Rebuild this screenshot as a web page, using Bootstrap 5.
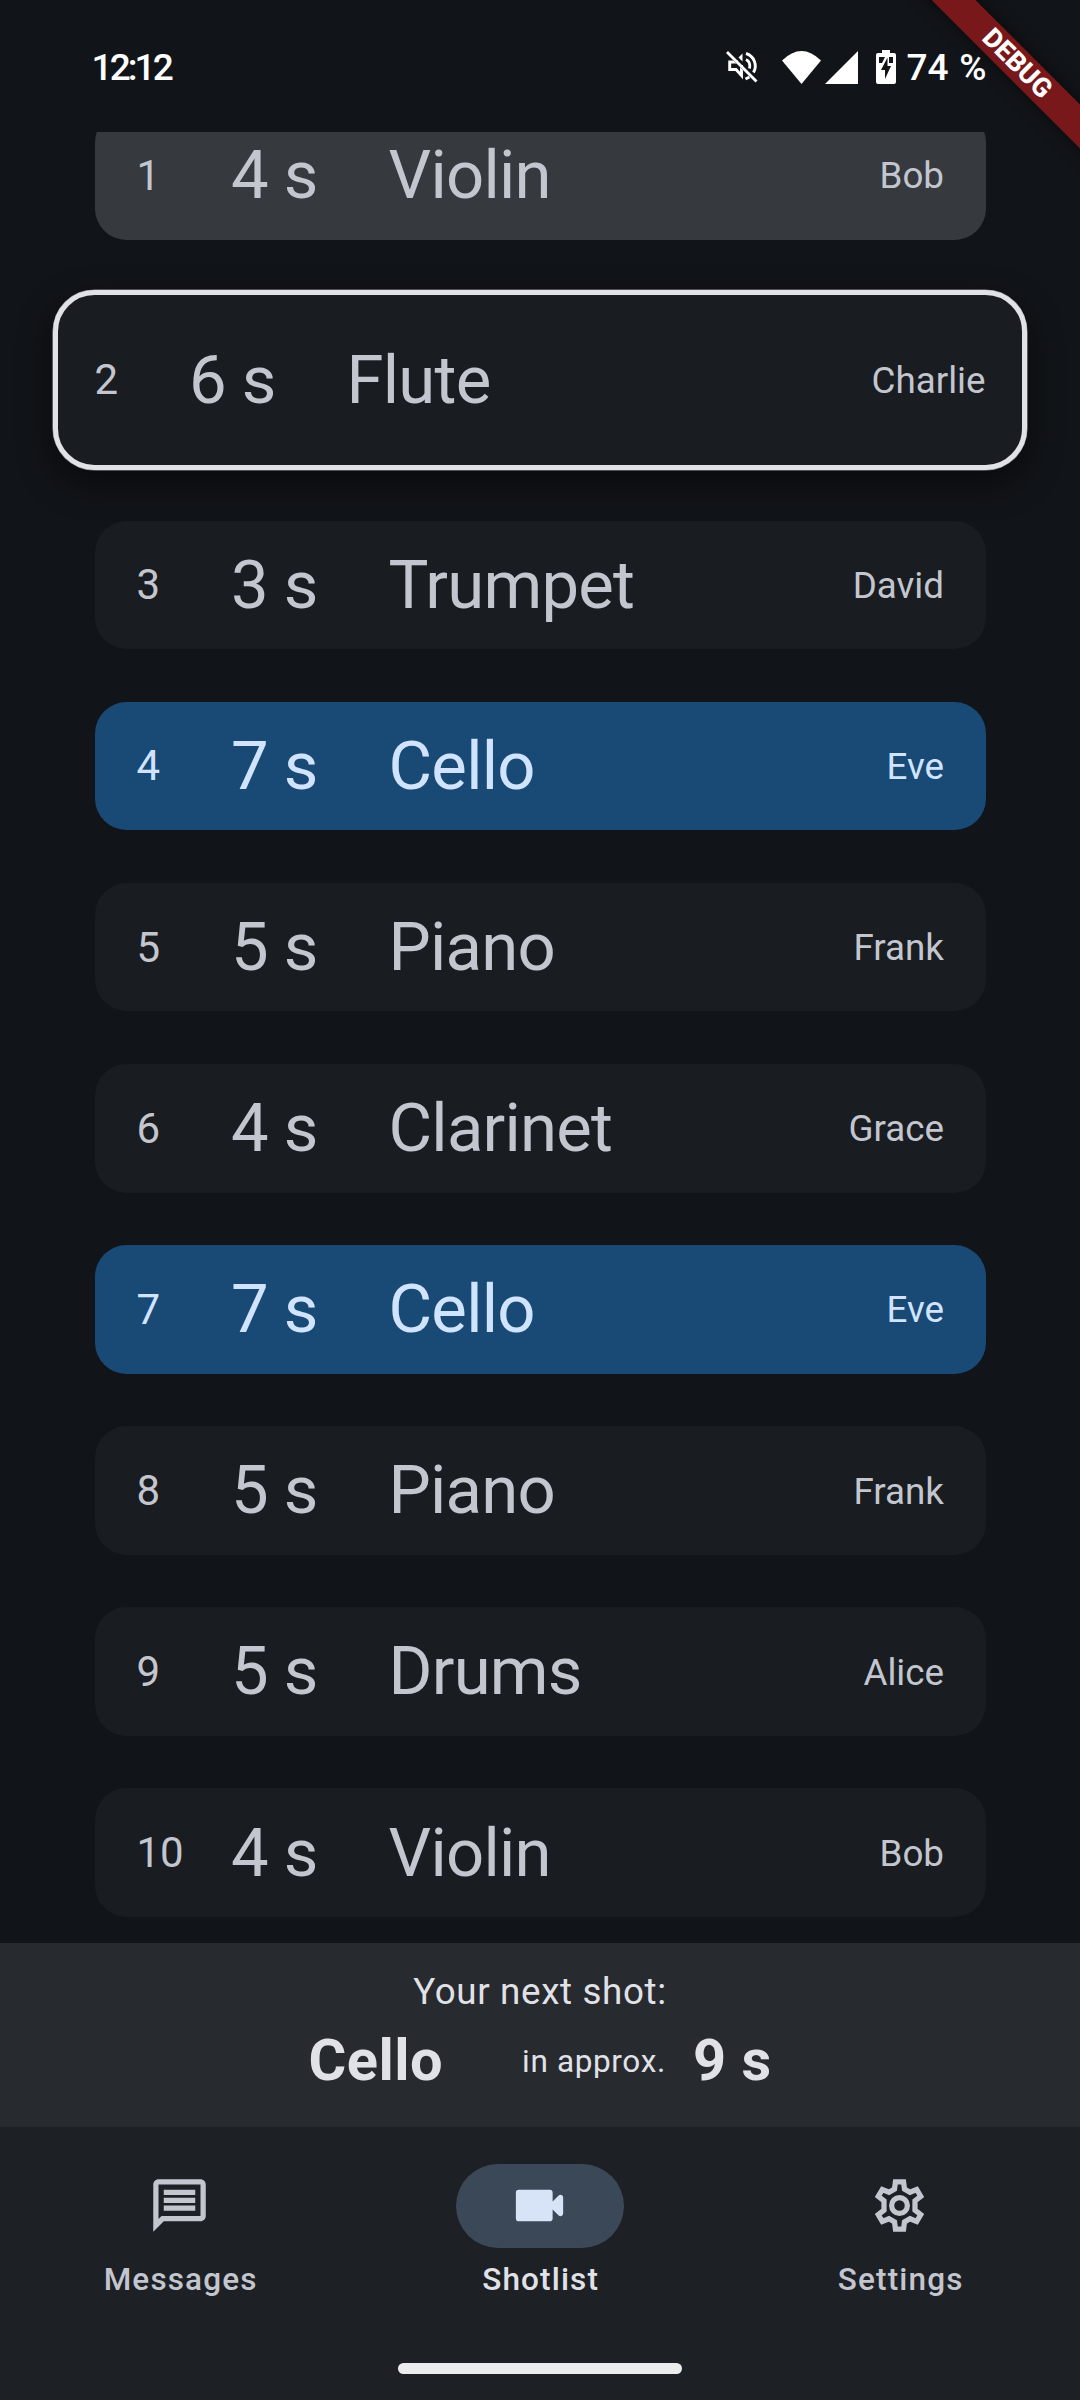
<!DOCTYPE html>
<html lang="en" data-bs-theme="dark">
<head>
<meta charset="utf-8">
<meta name="viewport" content="width=device-width, initial-scale=1">
<title>Shotlist</title>
<link href="https://cdn.jsdelivr.net/npm/bootstrap@5.3.0/dist/css/bootstrap.min.css" rel="stylesheet">
<style>
  body { background: #111418; color: #c3c6cf; font-family: Roboto, "Liberation Sans", sans-serif; line-height: 1.1719; }
  .screen { width: 1080px; height: 2400px; }
  .status-bar { height: 132px; padding: 3px 93.5px 0 91.5px; color: #fff; font-size: 37px; font-weight: 500; }
  .clock { letter-spacing: -2.9px; }
  .status-icons svg { display: block; }
  .battery-text { margin-left: 11px; word-spacing: 1.5px; }
  .icon-wifi { margin-left: 21.5px; }
  .icon-battery { margin-left: 18px; }
  .shots { height: 1811px; padding: 0 94.5px; }
  .shots-inner { margin-top: -21px; }
  .shot { height: 128.625px; margin-bottom: 52.5px; padding: 0 41.5px 0 42px; border-radius: 31.5px; background: #191c20; flex: none; }
  .shot-past { background: #36393e; margin-bottom: 50.3px; }
  .shot-mine { background: #194975; color: #d1e4ff; }
  .shot-now { height: 180px; margin: 0 -41.5px 50.7px; padding: 0 36.5px; border: 5px solid #e1e2e8; border-radius: 41.5px; box-shadow: 0 0 0 .6px #8d8f94, 0 13px 32px rgba(0,0,0,.5); }
  .shot-no { width: 94.5px; font-size: 42px; }
  .shot-time { width: 157.5px; }
  .shot-time, .shot-title { font-size: 67px; letter-spacing: -.75px; }
  .shot-who { font-size: 36.75px; padding-top: 1px; }
  .next-shot { height: 184px; background: #272a2f; color: #e1e2e8; padding-top: 27px; }
  .next-label { font-size: 36.75px; letter-spacing: .65px; margin-bottom: 14px; }
  .next-strong { font-size: 57.75px; font-weight: 700; letter-spacing: .5px; }
  .next-approx { font-size: 31.5px; letter-spacing: .65px; margin: 0 27px 0 79px; padding-top: 3px; }
  .tabs { height: 273px; background: #1d2024; padding-top: 37px; }
  .tab-item { font-size: 31.5px; font-weight: 500; letter-spacing: 1.15px; color: #c3c6cf; width: 360px; }
  .tab-item span { padding-left: 1.3px; }
  .tab-item.is-on { color: #e1e2e8; }
  .tab-pill { width: 168px; height: 84px; margin-bottom: 14px; }
  .tab-pill svg { margin: 0 .5px 1.5px 0; }
  .is-on .tab-pill { background: #3b4858; color: #d7e3f7; }
  .handle { width: 284px; height: 11px; border-radius: 5.5px; background: #ececec; bottom: 26px; left: 398px; }
  .ribbon-box { width: 260px; height: 260px; top: 0; right: 0; }
  .ribbon { width: 400px; height: 31.1px; left: -3px; top: 47.5px; transform: rotate(45deg); background: #79181a; color: #fff; font-size: 26.8px; font-weight: 800; line-height: 31px; box-shadow: 0 0 16px rgba(0,0,0,.5); }
</style>
</head>
<body>
<div class="screen position-relative overflow-hidden d-flex flex-column">
  <header class="status-bar d-flex justify-content-between align-items-center">
    <div class="clock">12:12</div>
    <div class="status-icons d-flex align-items-center">
      <svg width="34" height="34" viewBox="0 0 34 34" fill="none" stroke="#fff" stroke-width="2.9">
        <path d="M12 12H3.700v7.500H10l5.500 6V15"/>
        <path d="M12.500 7.500l4-4v8z" fill="#fff" stroke="none"/>
        <path d="M20 3.500A13 13 0 0 1 27.500 22.500M20 9.500q5 2.500 3.500 9M19.500 29l4-2"/>
        <path d="M2.500 4 31.500 33.500M0 1.500 30 31.500" stroke="#111418" stroke-width="2"/>
        <path d="M1 2 30.500 31.500"/>
      </svg>
      <svg class="icon-wifi" width="39" height="33" viewBox="0 0 39 33" fill="#fff"><path d="M0 9.500Q19.500-9.500 39 9.500L19.500 33z"/></svg>
      <svg class="ms-1" width="33" height="33" viewBox="0 0 33 33" fill="#fff"><path d="M33 0v33H0z"/></svg>
      <svg class="icon-battery" width="20" height="34" viewBox="0 0 20 34"><path fill="#fff" d="M6 0h8v3h4q2 0 2 2v27q0 2-2 2H2q-2 0-2-2V5q0-2 2-2h4z"/><path fill="#111418" d="M3 7h6l-3 6H3zM17 7h-4v6h4zM11.500 7.500 5 20h4v9l6-13h-3.500z"/></svg>
      <div class="battery-text">74 %</div>
    </div>
  </header>

  <main class="shots overflow-hidden flex-shrink-0">
    <div class="shots-inner d-flex flex-column">
      <div class="shot shot-past d-flex align-items-center"><span class="shot-no">1</span><span class="shot-time">4 s</span><span class="shot-title">Violin</span><span class="shot-who ms-auto">Bob</span></div>
      <div class="shot shot-now d-flex align-items-center"><span class="shot-no">2</span><span class="shot-time">6 s</span><span class="shot-title">Flute</span><span class="shot-who ms-auto">Charlie</span></div>
      <div class="shot d-flex align-items-center position-relative"><span class="shot-no">3</span><span class="shot-time">3 s</span><span class="shot-title">Trumpet</span><span class="shot-who ms-auto">David</span></div>
      <div class="shot shot-mine d-flex align-items-center"><span class="shot-no">4</span><span class="shot-time">7 s</span><span class="shot-title">Cello</span><span class="shot-who ms-auto">Eve</span></div>
      <div class="shot d-flex align-items-center"><span class="shot-no">5</span><span class="shot-time">5 s</span><span class="shot-title">Piano</span><span class="shot-who ms-auto">Frank</span></div>
      <div class="shot d-flex align-items-center"><span class="shot-no">6</span><span class="shot-time">4 s</span><span class="shot-title">Clarinet</span><span class="shot-who ms-auto">Grace</span></div>
      <div class="shot shot-mine d-flex align-items-center"><span class="shot-no">7</span><span class="shot-time">7 s</span><span class="shot-title">Cello</span><span class="shot-who ms-auto">Eve</span></div>
      <div class="shot d-flex align-items-center"><span class="shot-no">8</span><span class="shot-time">5 s</span><span class="shot-title">Piano</span><span class="shot-who ms-auto">Frank</span></div>
      <div class="shot d-flex align-items-center"><span class="shot-no">9</span><span class="shot-time">5 s</span><span class="shot-title">Drums</span><span class="shot-who ms-auto">Alice</span></div>
      <div class="shot d-flex align-items-center"><span class="shot-no">10</span><span class="shot-time">4 s</span><span class="shot-title">Violin</span><span class="shot-who ms-auto">Bob</span></div>
    </div>
  </main>

  <section class="next-shot flex-shrink-0 d-flex flex-column align-items-center">
    <div class="next-label">Your next shot:</div>
    <div class="d-flex align-items-center">
      <span class="next-strong">Cello</span><span class="next-approx">in approx.</span><span class="next-strong">9 s</span>
    </div>
  </section>

  <nav class="tabs flex-shrink-0 d-flex position-relative">
    <div class="tab-item d-flex flex-column align-items-center">
      <div class="tab-pill rounded-pill d-flex align-items-center justify-content-center">
        <svg width="63" height="63" viewBox="0 0 24 24" fill="currentColor"><path d="M4 4h16v12H5.170L4 17.170V4m0-2c-1.100 0-1.990.9-1.990 2L2 22l4-4h14c1.100 0 2-.9 2-2V4c0-1.100-.9-2-2-2H4zm2 10h12v2H6v-2zm0-3h12v2H6V9zm0-3h12v2H6V6z"/></svg>
      </div>
      <span>Messages</span>
    </div>
    <div class="tab-item is-on d-flex flex-column align-items-center">
      <div class="tab-pill rounded-pill d-flex align-items-center justify-content-center">
        <svg width="63" height="63" viewBox="0 0 24 24" fill="currentColor"><path d="M17 10.500V7c0-.55-.45-1-1-1H4c-.55 0-1 .45-1 1v10c0 .55.45 1 1 1h12c.55 0 1-.45 1-1v-3.500l2.290 2.290c.63.63 1.710.18 1.710-.71V8.910c0-.89-1.080-1.340-1.710-.71L17 10.500z"/></svg>
      </div>
      <span>Shotlist</span>
    </div>
    <div class="tab-item d-flex flex-column align-items-center">
      <div class="tab-pill rounded-pill d-flex align-items-center justify-content-center">
        <svg width="63" height="63" viewBox="0 0 24 24" fill="none" stroke="currentColor" stroke-width="2"><circle cx="12" cy="12" r="3"/><path d="M10.450 3h3.100l.35 2.750 2.100 1.200 2.550-1.050 1.550 2.650-2.200 1.700v3.500l2.200 1.700-1.550 2.650-2.550-1.050-2.100 1.200-.35 2.750h-3.100l-.35-2.750-2.100-1.200-2.550 1.050-1.550-2.650 2.200-1.700v-3.500l-2.200-1.700 1.550-2.650 2.550 1.050 2.100-1.200z"/></svg>
      </div>
      <span>Settings</span>
    </div>
    <div class="handle position-absolute"></div>
  </nav>

  <div class="ribbon-box position-absolute overflow-hidden">
    <div class="ribbon position-absolute text-center">DEBUG</div>
  </div>
</div>
<script src="https://cdn.jsdelivr.net/npm/bootstrap@5.3.0/dist/js/bootstrap.bundle.min.js"></script>
</body>
</html>
